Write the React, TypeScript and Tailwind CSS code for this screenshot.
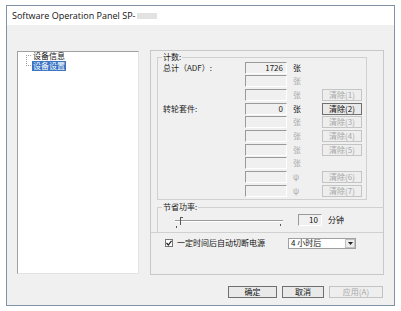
import React from "react";

const cjk = { fontFamily: '"Noto Sans CJK SC", "Liberation Sans", sans-serif' };

function Field({ value }: { value?: string }) {
  return (
    <div className="w-[42px] h-[12px] border-t border-l border-t-[#9a9a9a] border-l-[#9a9a9a] border-b border-r border-b-white border-r-white bg-[#f0f0f0] flex items-center justify-end pr-[3px] text-[8px] leading-none text-[#222]">
      {value}
    </div>
  );
}

function Btn({ label, enabled, w = "w-[40px]" }: { label: string; enabled?: boolean; w?: string }) {
  return (
    <div
      className={`${w} h-[12px] border flex items-center justify-center text-[8px] leading-none ${
        enabled ? "border-[#707070] bg-[#e9e9e9] text-[#111]" : "border-[#c4c4c4] bg-[#eeeeee] text-[#a8a8a8]"
      }`}
      style={cjk}
    >
      {label}
    </div>
  );
}

const rows: { label?: string; value?: string; unit: string; unitOn?: boolean; btn?: string; btnOn?: boolean }[] = [
  { label: "总计（ADF）:", value: "1726", unit: "张", unitOn: true },
  { unit: "张" },
  { unit: "张", btn: "清除(1)" },
  { label: "转轮套件:", value: "0", unit: "张", unitOn: true, btn: "清除(2)", btnOn: true },
  { unit: "张", btn: "清除(3)" },
  { unit: "张", btn: "清除(4)" },
  { unit: "张", btn: "清除(5)" },
  { unit: "张" },
  { unit: "ψ", btn: "清除(6)" },
  { unit: "ψ", btn: "清除(7)" },
];

export default function App() {
  return (
    <div className="w-[401px] h-[311px] bg-white pt-[5px] pl-[6px]" style={cjk}>
      <div className="w-[389px] h-[301px] border border-[#8292a6] flex flex-col">
        <div className="h-[19px] bg-white flex items-center pl-[5px] text-[9px] text-[#111]" style={{ fontFamily: '"Open Sans", "Liberation Sans", sans-serif' }}>
          <span>Software Operation Panel SP-</span>
          <span className="ml-[2px] w-[20px] h-[6px] bg-[#e2e2e2]" />
        </div>
        <div className="flex-1 bg-[#f0f0f0] flex flex-col">
          <div className="flex pl-[10px] pt-[25px]">
            {/* tree */}
            <div className="mt-[1px] w-[122px] h-[223px] bg-white border-t border-l border-t-[#a0a0a0] border-l-[#a0a0a0] border-b border-r border-b-[#e3e3e3] border-r-[#e3e3e3] pl-[7px]">
              <div className="flex -mt-[1px]">
                <div className="w-[7px] relative">
                  <div className="absolute left-[1px] top-[4px] h-[11px] border-l border-dotted border-[#a0a0a0]" />
                  <div className="absolute left-[1px] top-[4px] w-[5px] border-t border-dotted border-[#a0a0a0]" />
                  <div className="absolute left-[1px] top-[14px] w-[5px] border-t border-dotted border-[#a0a0a0]" />
                </div>
                <div className="flex flex-col items-start text-[8px] leading-[10px]">
                  <span className="px-[1px] text-[#111]">设备信息</span>
                  <span className="px-[1px] bg-[#3a74c4] text-white">设备设置</span>
                </div>
              </div>
            </div>
            {/* right panel */}
            <div className="ml-[11px] w-[234px] h-[225px] border border-[#c8c8c8] flex flex-col">
              {/* counter group */}
              <div className="ml-[6px] mt-[6px] w-[210px] h-[143px] border border-[#d0d0d0] relative">
                <span className="absolute -top-[6px] left-[4px] bg-[#f0f0f0] px-[1px] text-[8px] leading-[10px] text-[#222]">计数:</span>
                <div className="flex flex-col pt-[3px]">
                  {rows.map((r, i) => (
                    <div key={i} className="h-[13.67px] flex items-center">
                      <div className="w-[87px] pl-[5px] text-[8px] leading-none text-[#222]">{r.label}</div>
                      <Field value={r.value} />
                      <div className={`w-[35px] pl-[6px] text-[8px] leading-none ${r.unitOn ? "text-[#111]" : "text-[#a8a8a8]"}`}>{r.unit}</div>
                      {r.btn ? <Btn label={r.btn} enabled={r.btnOn} /> : null}
                    </div>
                  ))}
                </div>
              </div>
              {/* power save group */}
              <div className="ml-[6px] mt-[7px] w-[227px] h-[25px] border-t border-l border-[#d0d0d0] relative">
                <span className="absolute -top-[6px] left-[4px] bg-[#f0f0f0] px-[1px] text-[8px] leading-[10px] text-[#222]">节省功率:</span>
                <div className="flex items-center pt-[6px]">
                  <div className="w-[130px] relative h-[12px]">
                    <div className="absolute left-[17px] top-[6px] w-[108px] h-[2px] border-t border-t-[#9a9a9a] border-b border-b-white" />
                    <div className="absolute left-[22px] top-[3px] w-[3px] h-[8px] border-l border-t border-[#555]" />
                    <div className="absolute left-[18px] top-[12px] w-[1px] h-[2px] bg-[#555]" />
                    <div className="absolute left-[122px] top-[10px] w-[1px] h-[2px] bg-[#555]" />
                  </div>
                  <div className="ml-[10px] w-[24px] h-[12px] border-t border-l border-t-[#9a9a9a] border-l-[#9a9a9a] border-b border-r border-b-white border-r-white flex items-center justify-end pr-[3px] text-[8px] leading-none text-[#111]">10</div>
                  <span className="ml-[6px] text-[8px] leading-none text-[#111]">分钟</span>
                </div>
              </div>
              {/* auto power off */}
              <div className="border-t border-[#d0d0d0] flex items-center h-[20px] pt-[1px]">
                <div className="ml-[14px] w-[8px] h-[8px] border border-[#777] bg-white flex items-center justify-center">
                  <svg width="6" height="6" viewBox="0 0 6 6"><path d="M0.5 3 L2.3 5 L5.5 0.8" stroke="#222" strokeWidth="1.2" fill="none" /></svg>
                </div>
                <span className="ml-[4px] text-[8px] leading-none text-[#111]">一定时间后自动切断电源</span>
                <div className="ml-[23px] w-[68px] h-[11px] border border-[#a0a0a0] bg-white flex items-center">
                  <span className="flex-1 pl-[2px] text-[8px] leading-none text-[#111]">4 小时后</span>
                  <div className="w-[10px] h-[9px] border border-[#c0c0c0] bg-[#ececec] flex items-center justify-center">
                    <svg width="5" height="3" viewBox="0 0 5 3"><path d="M0 0 L5 0 L2.5 3 Z" fill="#222" /></svg>
                  </div>
                </div>
              </div>
            </div>
          </div>
          {/* bottom buttons */}
          <div className="flex justify-end gap-[5px] pr-[11px] pt-[11px]">
            <Btn label="确定" enabled w="w-[49px]" />
            <Btn label="取消" enabled w="w-[42px]" />
            <Btn label="应用(A)" w="w-[54px]" />
          </div>
        </div>
      </div>
    </div>
  );
}
